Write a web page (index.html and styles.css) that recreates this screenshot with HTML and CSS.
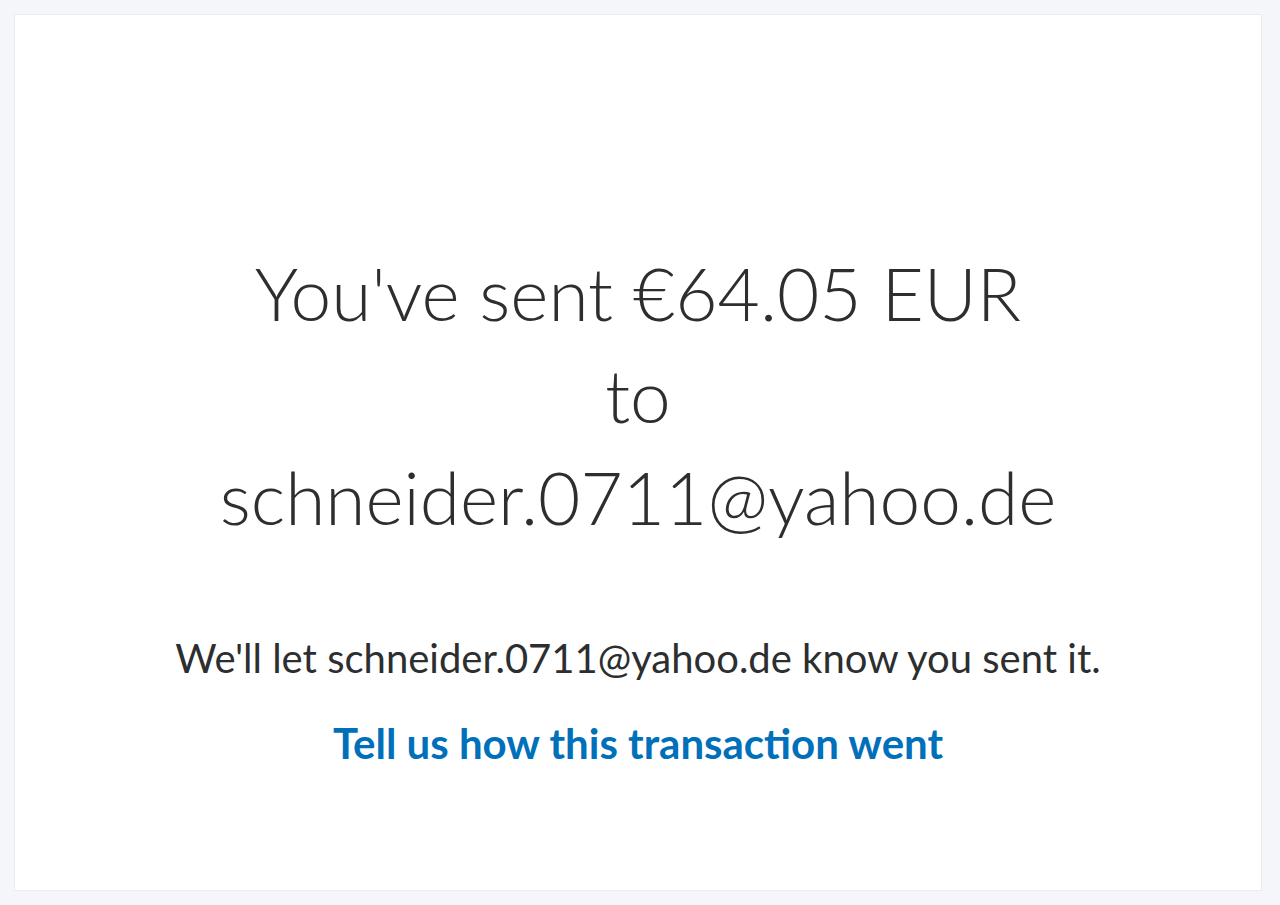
FILE: index.html
```html
<!DOCTYPE html>
<html lang="en">
<head>
  <meta charset="UTF-8">
  <meta name="viewport" content="width=device-width, initial-scale=1.0">
  <title>Payment sent</title>
  <link rel="stylesheet" href="styles.css">
</head>
<body>
  <main class="card">
    <h1 class="headline">You've sent €64.05 EUR<br>to<br>schneider.0711@yahoo.de</h1>
    <p class="note">We'll let schneider.0711@yahoo.de know you sent it.</p>
    <a class="feedback" href="#">Tell us how this transaction went</a>
  </main>
</body>
</html>
```

FILE: styles.css
```css
* {
  box-sizing: border-box;
  margin: 0;
  padding: 0;
}

body {
  background-color: #f5f6f9;
  padding: 14px 18px 14px 14px;
  height: 905px;
  font-family: Lato, "Noto Sans", sans-serif;
  color: #2c2e2f;
}

.card {
  height: 877px;
  background-color: #fff;
  border: 1px solid #ebebeb;
  display: flex;
  flex-direction: column;
  align-items: center;
  text-align: center;
  padding-top: 227px;
}

.headline {
  font-size: 73px;
  font-weight: 300;
  line-height: 102px;
}

.note {
  margin-top: 86px;
  font-size: 40px;
}

.feedback {
  margin-top: 36px;
  font-size: 42px;
  font-weight: 700;
  color: #0070ba;
  text-decoration: none;
}
```
